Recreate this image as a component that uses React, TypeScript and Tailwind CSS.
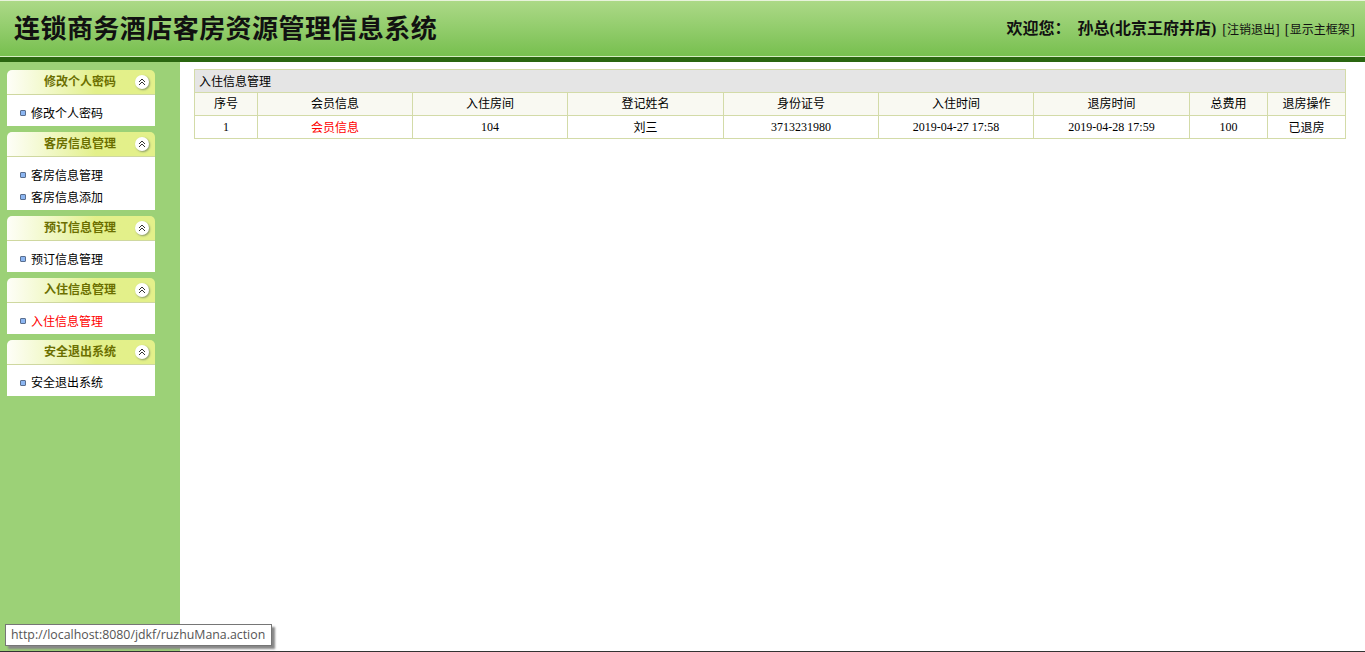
const menus = [
  { title: "修改个人密码", items: ["修改个人密码"] },
  { title: "客房信息管理", items: ["客房信息管理", "客房信息添加"] },
  { title: "预订信息管理", items: ["预订信息管理"] },
  { title: "入住信息管理", items: ["入住信息管理"], active: "入住信息管理" },
  { title: "安全退出系统", items: ["安全退出系统"], raised: true },
];

const columns = [
  { name: "序号", width: "w-[63px]", value: "1" },
  { name: "会员信息", width: "w-[155px]", value: "会员信息", red: true, cjk: true },
  { name: "入住房间", width: "w-[155px]", value: "104" },
  { name: "登记姓名", width: "w-[156px]", value: "刘三", cjk: true },
  { name: "身份证号", width: "w-[155px]", value: "3713231980" },
  { name: "入住时间", width: "w-[155px]", value: "2019-04-27 17:58" },
  { name: "退房时间", width: "w-[156px]", value: "2019-04-28 17:59" },
  { name: "总费用", width: "w-[78px]", value: "100" },
  { name: "退房操作", width: "w-[78px]", value: "已退房", cjk: true },
];

function CollapseIcon() {
  return (
    <span className="flex h-[14px] w-[14px] items-center justify-center rounded-full bg-white shadow-[1px_1px_2px_#8a9a6a]">
      <svg width="8" height="8" viewBox="0 0 8 8" fill="none" stroke="#333" strokeWidth="1">
        <path d="M1 4l3-3 3 3" />
        <path d="M1 7l3-3 3 3" />
      </svg>
    </span>
  );
}

function MenuPanel({ title, items, active, raised }: { title: string; items: string[]; active?: string; raised?: boolean }) {
  return (
    <div className="w-[148px]">
      <div className="flex h-[25px] items-center rounded-t-[5px] border-b border-[#cfd8a0] bg-gradient-to-r from-[#fefef8] to-[#e3f08a] to-60% pr-[6px]">
        <span className="flex-1 pl-[37px] text-xs font-bold text-[#6b6f00]">{title}</span>
        <CollapseIcon />
      </div>
      <ul className="flex flex-col gap-[4px] bg-white pb-[4px] pl-[13px] pt-[9px]">
        {items.map((item) => (
          <li key={item} className="flex h-[18px] items-center gap-[5px] text-xs text-black">
            <span className="h-[6px] w-[6px] rounded-[1px] border border-[#5a6f8f] bg-[#8cb6f2]" />
            <span className={`${raised ? "" : "pt-[2px]"} ${item === active ? "text-[#ff0000]" : ""}`}>{item}</span>
          </li>
        ))}
      </ul>
    </div>
  );
}

export default function App() {
  return (
    <div className="relative flex h-[652px] flex-col overflow-hidden border-b border-[#333] bg-white font-['Liberation_Serif','Noto_Sans_CJK_SC',serif]">
      {/* Header */}
      <header className="flex h-[62px] shrink-0 items-center justify-between border-t border-[#e8f3dc] border-b-[5px] border-b-[#2a6610] bg-gradient-to-b from-[#acd987] to-[#76bf4d] pl-[14px] pr-[10px] shadow-[inset_0_-1px_0_#d4ecc0]">
        <h1 className="text-[26px] font-bold tracking-[0.45px] text-[#111]">连锁商务酒店客房资源管理信息系统</h1>
        <div className="flex items-baseline text-[#111]">
          <span className="text-base font-bold">欢迎您：</span>
          <span className="ml-[7px] text-base font-bold">孙总(北京王府井店)</span>
          <span className="ml-[6px] text-sm">[<span className="text-xs">注销退出</span>]</span>
          <span className="ml-[5px] text-sm">[<span className="px-[0.5px] text-xs">显示主框架</span>]</span>
        </div>
      </header>

      <div className="flex min-h-0 flex-1">
        {/* Sidebar */}
        <aside className="flex w-[180px] shrink-0 flex-col gap-[6px] bg-[#9cd177] pl-[7px] pt-[8px]">
          {menus.map((menu) => (
            <MenuPanel key={menu.title} {...menu} />
          ))}
        </aside>

        {/* Main */}
        <main className="flex-1 pl-[14px] pt-[7px]">
          <table className="w-[1152px] table-fixed border-collapse border border-[#d3dba8] text-xs text-black">
            <colgroup>
              {columns.map((col) => (
                <col key={col.name} className={col.width} />
              ))}
            </colgroup>
            <thead>
              <tr>
                <th colSpan={9} className="h-[23px] border border-[#d3dba8] bg-[#e5e5e5] pl-[4px] pt-px text-left font-normal">
                  入住信息管理
                </th>
              </tr>
              <tr>
                {columns.map((col) => (
                  <th key={col.name} className="h-[23px] border border-[#d3dba8] bg-[#f9f9f2] text-center font-normal">
                    {col.name}
                  </th>
                ))}
              </tr>
            </thead>
            <tbody>
              <tr>
                {columns.map((col) => (
                  <td key={col.name} className={`h-[23px] border border-[#d3dba8] text-center ${col.cjk ? "pt-[2px]" : ""} ${col.red ? "text-[#ff0000]" : ""}`}>
                    {col.value}
                  </td>
                ))}
              </tr>
            </tbody>
          </table>
        </main>
      </div>

      {/* Status tooltip */}
      <div className="absolute left-[5px] top-[624px] flex h-[22px] w-[267px] items-center border border-[#767676] bg-white pl-[5px] font-['Open_Sans',sans-serif] text-[12.35px] text-[#555] shadow-[3px_3px_2px_#888]">
        http://localhost:8080/jdkf/ruzhuMana.action
      </div>
    </div>
  );
}
